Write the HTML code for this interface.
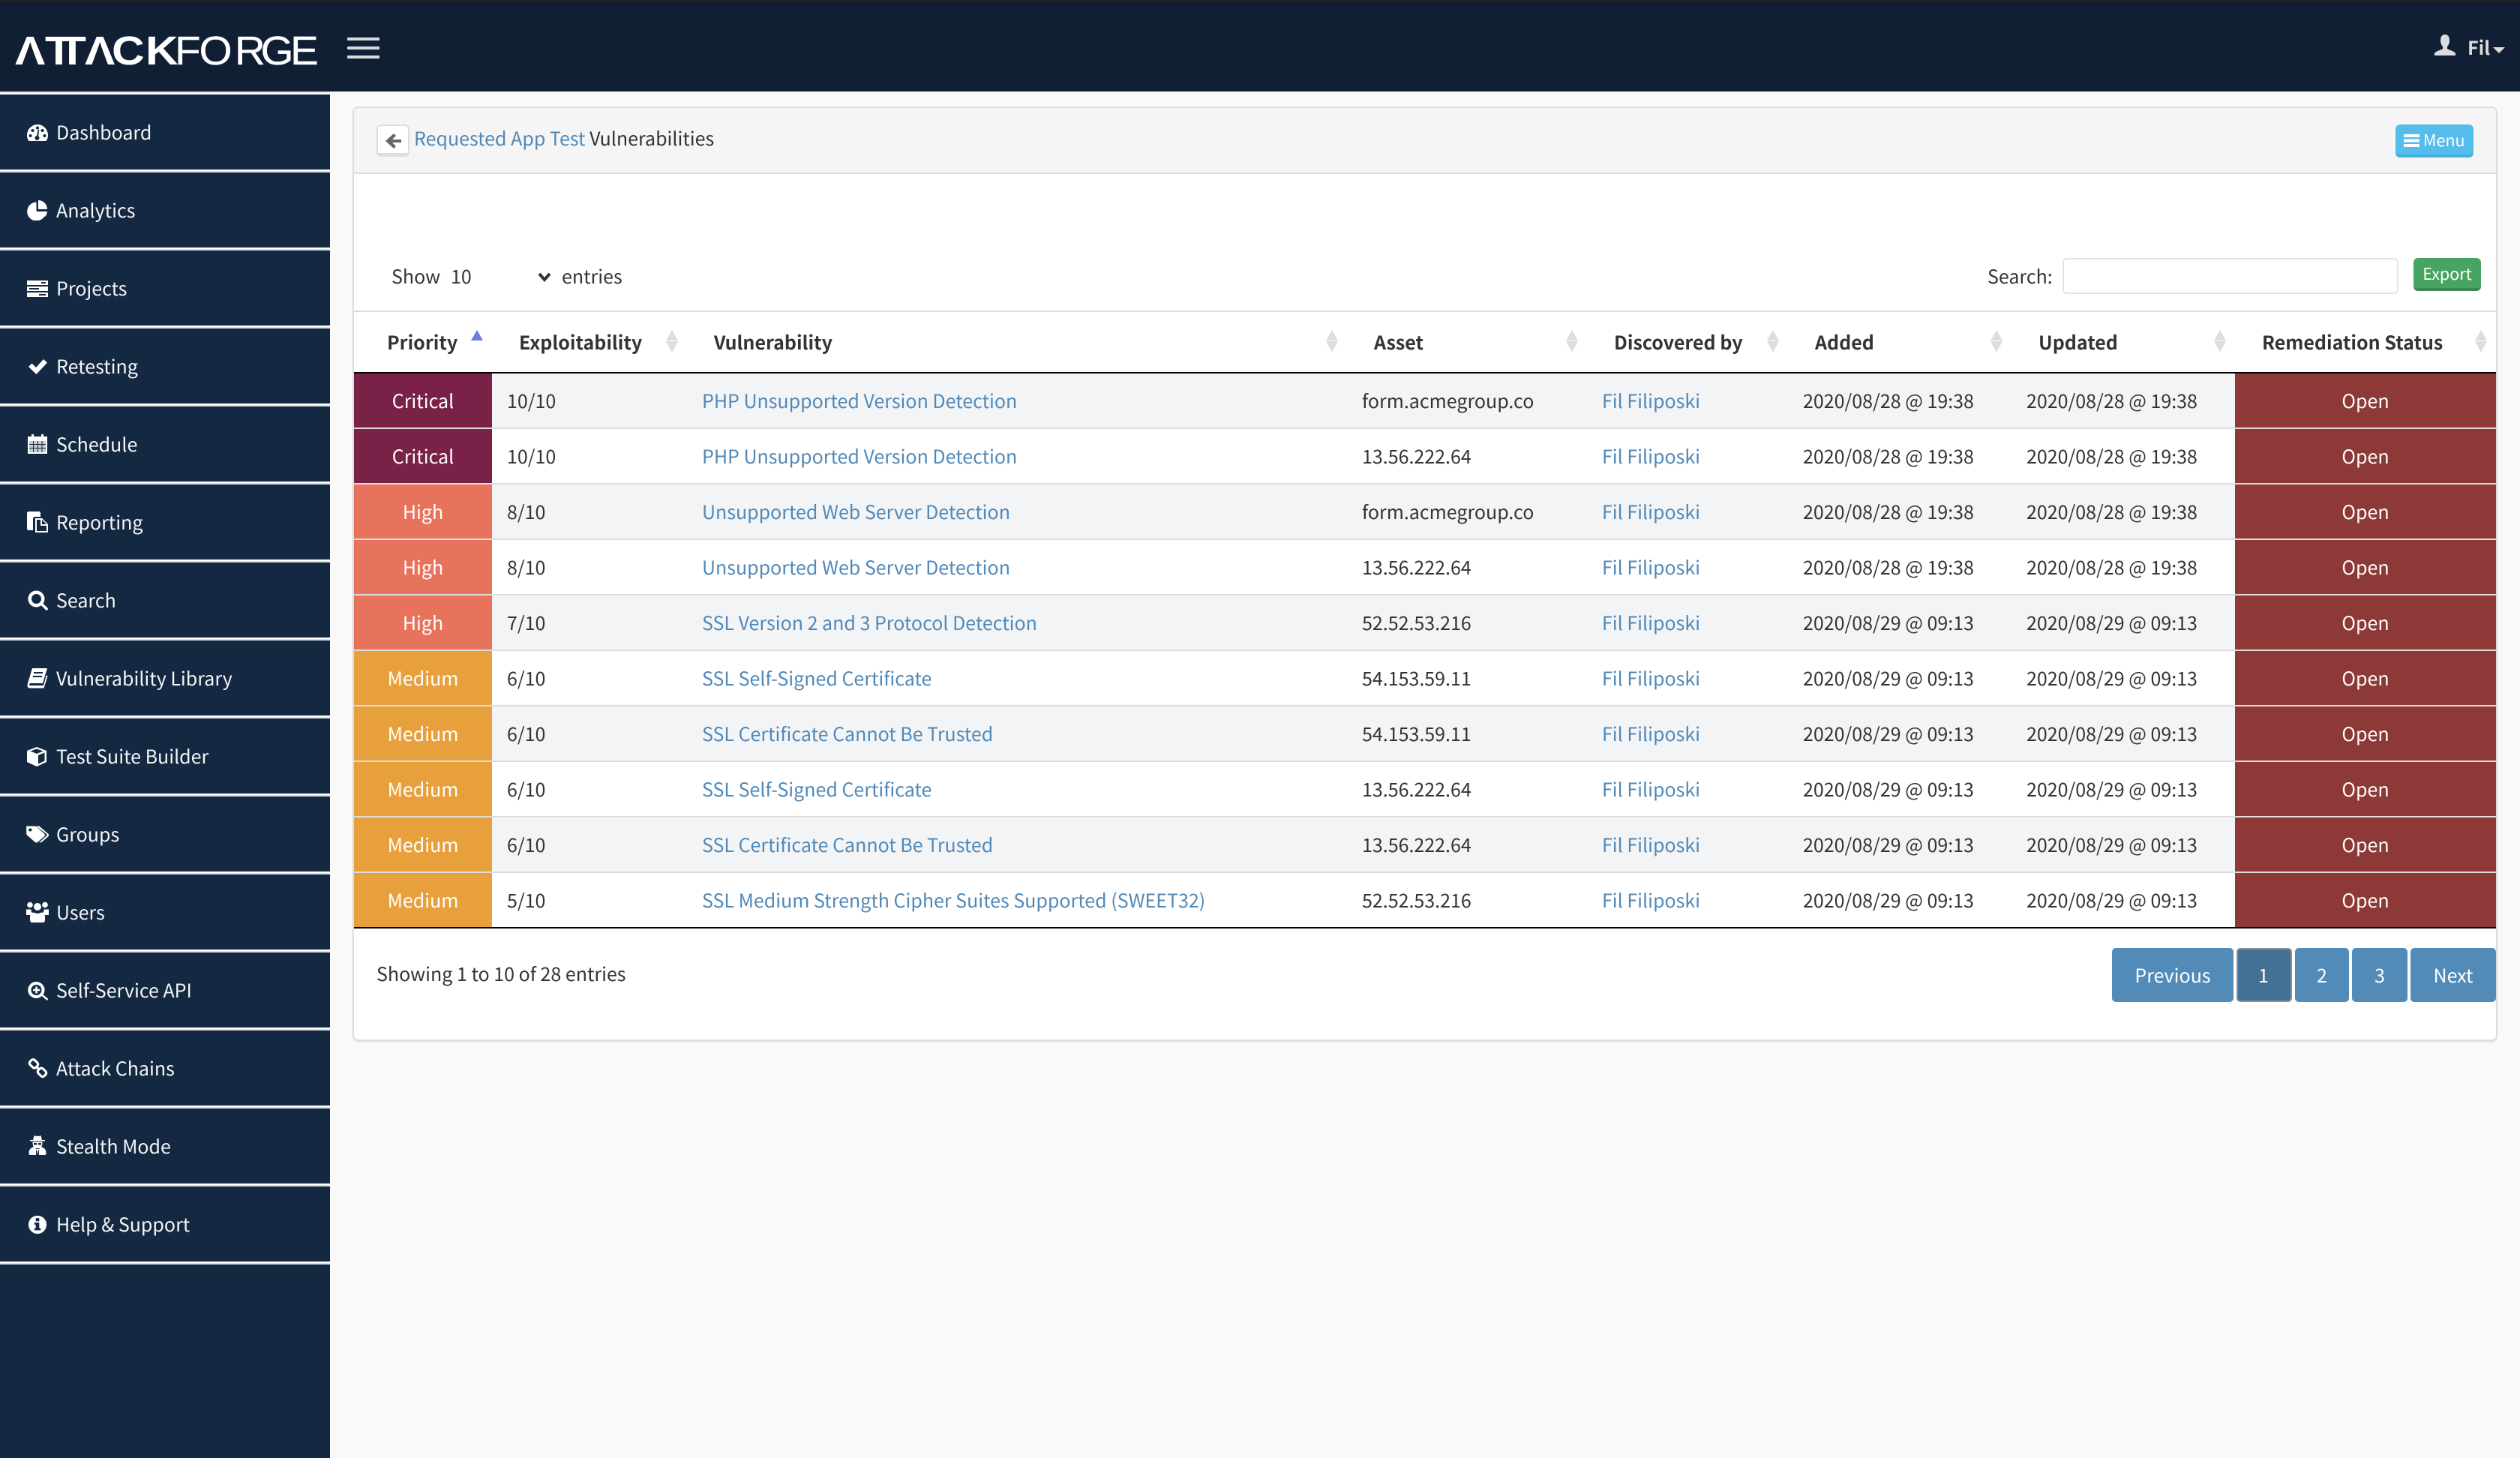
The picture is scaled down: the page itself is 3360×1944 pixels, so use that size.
<!DOCTYPE html>
<html lang="en"><head><meta charset="utf-8"><title>AttackForge</title>
<style>
*{box-sizing:border-box}
html,body{margin:0;padding:0;width:3360px;height:1944px;overflow:hidden;background:#f9f9f9}
body{font-family:"Noto Sans CJK JP","Liberation Sans",sans-serif;font-size:25px;color:#333;position:relative}
a{color:#5089b8;text-decoration:none}
.top{position:absolute;left:0;top:0;width:3360px;height:122px;background:#101f33;border-top:3px solid #222}
.side{position:absolute;left:0;top:122px;width:440px;height:1822px;background:#142842}
.item{position:absolute;left:0;width:440px;height:104px;background:#142842;border-bottom:4px solid #fff;box-shadow:inset 0 -2px 0 #142842}
.item::after{content:"";position:absolute;left:0;right:0;bottom:-4px;height:2px;background:#e2e2e4}
.item span{position:absolute;left:75px;top:0;line-height:100px;height:100px;color:#f4f6f8;white-space:nowrap}
.item svg{position:absolute;left:36px;top:36px;width:28px;height:28px;fill:#fff}
.sep0{position:absolute;left:0;top:122px;width:440px;height:4px;background:#fff;border-top:2px solid #e2e2e4}
.panel{position:absolute;left:470px;top:142px;width:2860px;height:1246px;background:#fff;border:2px solid #ddd;border-radius:8px;box-shadow:0 2px 1px #e4e4e4}
.phead{position:absolute;left:0;top:0;width:2856px;height:88px;background:#f5f5f5;border-bottom:2px solid #ddd;border-radius:6px 6px 0 0}
.abs{position:absolute;white-space:nowrap;line-height:40px}
.back{position:absolute;left:30px;top:22px;width:44px;height:43px;background:#fff;border:2px solid #ddd;border-bottom-width:5px;border-radius:6px}
.menu{position:absolute;left:2722px;top:22px;width:104px;height:44px;background:#54bdec;border-bottom:4px solid #46aede;border-radius:6px;color:#fff;font-size:21.5px;line-height:42px;padding-left:37px}
.export{position:absolute;left:2746px;top:200px;width:90px;height:44px;background:#48a463;border-bottom:4px solid #3c8a53;border-radius:6px;color:#fff;font-size:21.5px;line-height:42px;text-align:center}
.input{position:absolute;left:2278px;top:200px;width:448px;height:48px;background:#fff;border:2px solid #e4e4e4;border-radius:6px}
.rule{position:absolute;left:0;top:270px;width:2856px;height:2px;background:#ddd}
table{position:absolute;left:0;top:272px;width:2856px;border-collapse:separate;border-spacing:0;table-layout:fixed}
th{height:82px;text-align:left;padding:0 0 0 36px;font-weight:700;border-bottom:2px solid #000;position:relative;line-height:80px;white-space:nowrap;color:#333}
th:first-child{padding-left:44px}
th i{position:absolute;right:11px;top:24px;width:17px;height:30px}
th i::before,th i::after{content:"";position:absolute;left:0;border-left:8.5px solid transparent;border-right:8.5px solid transparent}
th i::before{top:0;border-bottom:14px solid #ddd}
th i::after{top:15px;border-top:15px solid #ddd}
th i.s::before{border-bottom-color:#6e7fd8}
th i.s::after{border-top-color:#fff}
td{height:74px;padding:0 0 0 20px;border-bottom:2px solid #ddd;line-height:72px;white-space:nowrap;overflow:hidden}
tbody tr:nth-child(odd) td{background:#f3f4f6}
tbody tr:last-child td{border-bottom-color:#000}
tbody tr td.c{background:#7a2148;color:#fff;text-align:center;padding:0}
tbody tr td.h{background:#e8735c;color:#fff;text-align:center;padding:0}
tbody tr td.m{background:#e8a03c;color:#fff;text-align:center;padding:0}
tbody tr td.o{background:#8c3937;color:#fff;text-align:center;padding:0}
.pg{position:absolute;top:1120px;height:72px;background:#528bb8;color:#fff;border-radius:5px;text-align:center;line-height:72px}
.pg.a{background:#437196;border:2px solid #8a8f94;line-height:68px;padding-right:2px}
</style></head>
<body>
<div class="top">
<svg style="position:absolute;left:0;top:-3px" width="520" height="122" viewBox="0 0 520 122">
<g fill="#fff" font-family="'Liberation Sans',sans-serif" font-size="54">
<text transform="scale(1.12 1)" font-weight="700" y="86" x="17.900 53.600 69.600 100.900 133 173.200">ΛTTΛCK</text>
<text transform="scale(1.05 1)" y="86" x="221.900 252.900 298 331 368.600" stroke="#fff" stroke-width=".3">FORGE</text>
</g>
<g fill="#d8dade"><rect x="463" y="50" width="43" height="4" rx="1"/><rect x="463" y="62" width="43" height="4" rx="1"/><rect x="463" y="74" width="43" height="4" rx="1"/></g>
</svg>
<svg style="position:absolute;left:3246px;top:43px" width="28" height="28" viewBox="0 0 28 28" fill="#dcdcdc"><path d="M14 0c4 0 6 3 6 8 0 3-1 6-3 8v3c3 2 9 3 11 6v3H0v-3c2-3 8-4 11-6v-3C9 14 8 11 8 8c0-5 2-8 6-8z"/></svg>
<div class="abs" style="left:3290px;top:40px;color:#dcdcdc;font-weight:700">Fil</div>
<div style="position:absolute;left:3324px;top:60px;border-left:8px solid transparent;border-right:8px solid transparent;border-top:8px solid #dcdcdc"></div>
</div>

<div class="side">
<div class="sep0" style="top:0"></div>
</div>
<div class="item" style="top:126px"><svg viewBox="0 0 28 28"><path d="M2.500 26C.8 23.800 0 21.400 0 18.500 0 10.500 6.300 4 14 4s14 6.500 14 14.500c0 2.900-.8 5.300-2.500 7.500z"/><g fill="#142842"><circle cx="4.500" cy="19" r="2"/><circle cx="7.500" cy="12" r="2"/><circle cx="14" cy="8.500" r="2"/><circle cx="20.500" cy="12" r="2"/><circle cx="23.500" cy="19" r="2"/><circle cx="13.500" cy="22" r="3"/><path d="M12.500 22l2-11h1.500l-1 11z"/></g></svg><span>Dashboard</span></div>
<div class="item" style="top:230px"><svg viewBox="0 0 28 28"><path d="M12.500 3.500A12.500 12.500 0 1 0 25 18l-12.500-2.500z"/><path d="M15 1a12 12 0 0 1 12 12H15z"/><path d="M16 16l11 0a12 12 0 0 1-3 7z"/></svg><span>Analytics</span></div>
<div class="item" style="top:334px"><svg viewBox="0 0 28 28"><path d="M0 4h28v6H0zM0 12h28v6H0zM0 20h28v6H0z"/><g fill="#142842"><rect x="19" y="6" width="6" height="2"/><rect x="3" y="14" width="13" height="2"/><rect x="16" y="22" width="9" height="2"/></g></svg><span>Projects</span></div>
<div class="item" style="top:438px"><svg viewBox="0 0 28 28"><path d="M2 15l4.500-4.500 5.500 5.500L22 5l5 4.500L12.500 25z"/></svg><span>Retesting</span></div>
<div class="item" style="top:542px"><svg viewBox="0 0 28 28"><path d="M1 4h5V1h3v3h10V1h3v3h5v23H1z"/><g fill="#142842"><rect x="3" y="10" width="22" height="15"/></g><path d="M3 10h5v4H3zM9 10h5v4H9zM15 10h4.500v4H15zM20.500 10H25v4h-4.500zM3 15h5v4H3zM9 15h5v4H9zM15 15h4.500v4H15zM20.500 15H25v4h-4.500zM3 20h5v5H3zM9 20h5v5H9zM15 20h4.500v5H15zM20.500 20H25v5h-4.500z" fill="#c8ccd2"/></svg><span>Schedule</span></div>
<div class="item" style="top:646px"><svg viewBox="0 0 28 28"><path d="M2 0h14c1 0 2 1 2 2v5h-7c-2 0-3 1-3 3v15H2c-1 0-2-1-2-2V2C0 1 1 0 2 0z"/><path fill-rule="evenodd" d="M11 9h9l8 8v11H11zM13 11v15h13V19h-8v-8zM20 11v6h6z"/></svg><span>Reporting</span></div>
<div class="item" style="top:750px"><svg viewBox="0 0 28 28"><path fill-rule="evenodd" d="M11.500 1.500a11 11 0 0 1 9 17.300l7 7-2.500 2.500-7-7a11 11 0 1 1-6.500-19.800zM11.500 6a6.500 6.500 0 1 0 0 13 6.500 6.500 0 0 0 0-13z" transform="translate(1 0)"/></svg><span>Search</span></div>
<div class="item" style="top:854px"><svg viewBox="0 0 28 28"><path d="M7 1h20l-6 20H5c-1.500 0-2 1-2 1.800 0 .8.600 1.200 1.500 1.200H22l4-14 1.500 1.500-5 16H4c-2.500 0-3.500-1.800-3.500-3.500 0-1 .2-2 .5-3zM9 6v2h12V6zM8 11v2h12v-2z" fill-rule="evenodd"/></svg><span>Vulnerability Library</span></div>
<div class="item" style="top:958px"><svg viewBox="0 0 28 28"><path fill-rule="evenodd" d="M13 2l13 5v15l-13 6L0 22V7zM4.500 7.500L13 11l8.500-3.500L13 4.500zM15 13v11.500l8.500-4V9.500z"/></svg><span>Test Suite Builder</span></div>
<div class="item" style="top:1062px"><svg viewBox="0 0 28 28" preserveAspectRatio="none" style="left:34px;width:32px;height:28px"><path fill-rule="evenodd" d="M1 3.500h9.500c1 0 2 .4 2.800 1.100L22 13.500c1 1 1 2.600 0 3.600l-7.500 7.500c-1 1-2.600 1-3.600 0L2 15.700C1.300 15 1 14 1 13zM5.500 6.500a2 2 0 1 0 0 4 2 2 0 0 0 0-4z"/><path d="M16 3.500l10.500 10.300c1 1 1 2.400 0 3.400l-8 8h-2.500l8.300-8.600c.9-.9.900-1.900 0-2.800L12.500 3.500z"/></svg><span>Groups</span></div>
<div class="item" style="top:1166px"><svg viewBox="0 0 30 28" style="left:35px;width:30px;height:28px"><circle cx="5" cy="4.500" r="3.800"/><circle cx="25" cy="4.500" r="3.800"/><circle cx="15" cy="7" r="5"/><path d="M0 10.500h6.500c-.3 2 .6 4 2 5-1.500.5-2.800 1.500-3.500 2.500H0zM30 10.500h-6.500c.3 2-.6 4-2 5 1.500.5 2.800 1.500 3.500 2.500h5z"/><path d="M10 14.500c1.200 1 3 1.500 5 1.500s3.800-.5 5-1.500c3 .5 5 2.500 5 6V25c0 1.500-1 3-3 3H8c-2 0-3-1.500-3-3v-4.500c0-3.500 2-5.500 5-6z"/></svg><span>Users</span></div>
<div class="item" style="top:1270px"><svg viewBox="0 0 28 28"><path fill-rule="evenodd" d="M11.500 3a11 11 0 0 1 9 17.300l7 5.700-2 2-6.700-6a11 11 0 1 1-7.300-19zM11.500 7a7 7 0 1 0 0 14 7 7 0 0 0 0-14zM10.300 9.500h2.600v3.300h3.300v2.400h-3.300v3.300h-2.600v-3.300H7v-2.400h3.300z" transform="translate(1 0)"/></svg><span>Self-Service API</span></div>
<div class="item" style="top:1374px"><svg viewBox="0 0 28 28"><g fill="none" stroke="#fff" stroke-width="3.200"><path d="M5 4.500l-1.800 1.800a3 3 0 0 0 0 4.300l3.500 3.500a3 3 0 0 0 4.300 0l1.800-1.800a3 3 0 0 0 0-4.300L9.300 4.500a3 3 0 0 0-4.300 0z" transform="translate(1 -1)"/><path d="M17 15l-1.800 1.800a3 3 0 0 0 0 4.300l3.500 3.500a3 3 0 0 0 4.300 0l1.800-1.800a3 3 0 0 0 0-4.300L21.300 15a3 3 0 0 0-4.300 0z"/><path d="M12 12l5 5"/></g></svg><span>Attack Chains</span></div>
<div class="item" style="top:1478px"><svg viewBox="0 0 28 28"><path d="M9.500 0l2.500 1 2-.5L16 1l2.500-1L20 6h4v1.500H4V6h4z"/><path d="M7.500 8.500h13c.2 3-1 7-2 8.500h-9c-1-1.500-2.200-5.500-2-8.500z"/><path d="M8 15.500L12.500 18H15.500L20 15.500c3.500 1.200 5.500 4 5.500 7.500v1c0 1.200-.8 2-2 2h-19c-1.200 0-2-.8-2-2v-1c0-3.500 2-6.300 5.500-7.500z"/><g fill="#142842"><rect x="9" y="10" width="4" height="2.500"/><rect x="15" y="10" width="4" height="2.500"/><path d="M12 19.500h1l1 6.500h-2zM16 19.500h-1l-1 6.500h2z"/></g></svg><span>Stealth Mode</span></div>
<div class="item" style="top:1582px"><svg viewBox="0 0 28 28" style="left:37px;width:26px;height:28px"><path fill-rule="evenodd" d="M14 2a13 13 0 1 1 0 26 13 13 0 0 1 0-26zM11.500 5.500v4.500h5V5.500zM9.500 12v3h2v5h-2v3h9v-3h-2v-8z"/></svg><span>Help &amp; Support</span></div>

<div class="panel">
<div class="phead"></div>
<div class="back"><svg style="position:absolute;left:9px;top:9px" width="22" height="22" viewBox="0 0 22 22" fill="#666"><path d="M12 1l3 3-5 5h12v4H10l5 5-3 3L1 11z"/></svg></div>
<div class="abs" style="left:80px;top:20px"><a>Requested App Test</a> Vulnerabilities</div>
<div class="menu"><svg style="position:absolute;left:11px;top:13px" width="21" height="17" viewBox="0 0 21 17" fill="#fff"><rect width="21" height="4"/><rect y="6.500" width="21" height="4"/><rect y="13" width="21" height="4"/></svg>Menu</div>

<div class="abs" style="left:50px;top:204px">Show</div>
<div class="abs" style="left:129px;top:204px">10</div>
<svg style="position:absolute;left:245px;top:218px" width="18" height="16" viewBox="0 0 18 16"><path d="M2 3l7 8 7-8" fill="none" stroke="#333" stroke-width="4"/></svg>
<div class="abs" style="left:277px;top:204px">entries</div>
<div class="abs" style="left:2178px;top:204px">Search:</div>
<div class="input"></div>
<div class="export">Export</div>
<div class="rule"></div>

<table>
<colgroup><col style="width:184px"><col style="width:260px"><col style="width:880px"><col style="width:320px"><col style="width:268px"><col style="width:298px"><col style="width:298px"><col style="width:348px"></colgroup>
<thead><tr><th>Priority<i class="s"></i></th><th>Exploitability<i></i></th><th>Vulnerability<i></i></th><th>Asset<i></i></th><th>Discovered by<i></i></th><th>Added<i></i></th><th>Updated<i></i></th><th>Remediation Status<i></i></th></tr></thead>
<tbody>
<tr><td class="c">Critical</td><td>10/10</td><td><a>PHP Unsupported Version Detection</a></td><td>form.acmegroup.co</td><td><a>Fil Filiposki</a></td><td>2020/08/28 @ 19:38</td><td>2020/08/28 @ 19:38</td><td class="o">Open</td></tr>
<tr><td class="c">Critical</td><td>10/10</td><td><a>PHP Unsupported Version Detection</a></td><td>13.56.222.64</td><td><a>Fil Filiposki</a></td><td>2020/08/28 @ 19:38</td><td>2020/08/28 @ 19:38</td><td class="o">Open</td></tr>
<tr><td class="h">High</td><td>8/10</td><td><a>Unsupported Web Server Detection</a></td><td>form.acmegroup.co</td><td><a>Fil Filiposki</a></td><td>2020/08/28 @ 19:38</td><td>2020/08/28 @ 19:38</td><td class="o">Open</td></tr>
<tr><td class="h">High</td><td>8/10</td><td><a>Unsupported Web Server Detection</a></td><td>13.56.222.64</td><td><a>Fil Filiposki</a></td><td>2020/08/28 @ 19:38</td><td>2020/08/28 @ 19:38</td><td class="o">Open</td></tr>
<tr><td class="h">High</td><td>7/10</td><td><a>SSL Version 2 and 3 Protocol Detection</a></td><td>52.52.53.216</td><td><a>Fil Filiposki</a></td><td>2020/08/29 @ 09:13</td><td>2020/08/29 @ 09:13</td><td class="o">Open</td></tr>
<tr><td class="m">Medium</td><td>6/10</td><td><a>SSL Self-Signed Certificate</a></td><td>54.153.59.11</td><td><a>Fil Filiposki</a></td><td>2020/08/29 @ 09:13</td><td>2020/08/29 @ 09:13</td><td class="o">Open</td></tr>
<tr><td class="m">Medium</td><td>6/10</td><td><a>SSL Certificate Cannot Be Trusted</a></td><td>54.153.59.11</td><td><a>Fil Filiposki</a></td><td>2020/08/29 @ 09:13</td><td>2020/08/29 @ 09:13</td><td class="o">Open</td></tr>
<tr><td class="m">Medium</td><td>6/10</td><td><a>SSL Self-Signed Certificate</a></td><td>13.56.222.64</td><td><a>Fil Filiposki</a></td><td>2020/08/29 @ 09:13</td><td>2020/08/29 @ 09:13</td><td class="o">Open</td></tr>
<tr><td class="m">Medium</td><td>6/10</td><td><a>SSL Certificate Cannot Be Trusted</a></td><td>13.56.222.64</td><td><a>Fil Filiposki</a></td><td>2020/08/29 @ 09:13</td><td>2020/08/29 @ 09:13</td><td class="o">Open</td></tr>
<tr><td class="m">Medium</td><td>5/10</td><td><a>SSL Medium Strength Cipher Suites Supported (SWEET32)</a></td><td>52.52.53.216</td><td><a>Fil Filiposki</a></td><td>2020/08/29 @ 09:13</td><td>2020/08/29 @ 09:13</td><td class="o">Open</td></tr>
</tbody></table>

<div class="abs" style="left:30px;top:1134px">Showing 1 to 10 of 28 entries</div>
<div class="pg" style="left:2344px;width:162px">Previous</div>
<div class="pg a" style="left:2510px;width:74px">1</div>
<div class="pg" style="left:2588px;width:72px">2</div>
<div class="pg" style="left:2664px;width:74px">3</div>
<div class="pg" style="left:2742px;width:114px">Next</div>
</div>
</body></html>
